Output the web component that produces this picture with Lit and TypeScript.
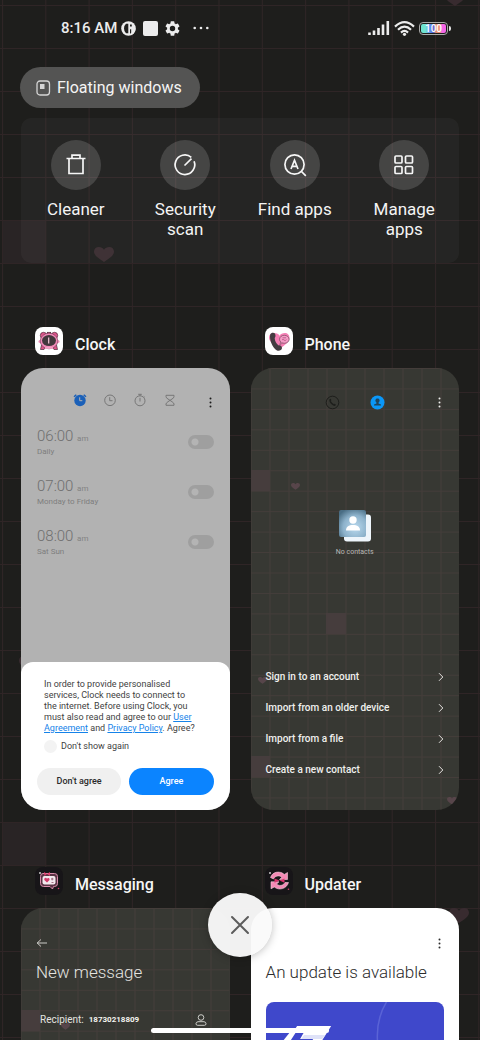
import { LitElement, html, svg, css } from "lit";
import { customElement, property } from "lit/decorators.js";

const heart = (x: number, y: number, w: number) => svg`
  <path transform="translate(${x} ${y}) scale(${w / 20})"
    d="M10 15C4 11 0 8.500 0 4.600C0 1.800 2 0 4.800 0C7 0 9 1 10 2.800C11 1 13 0 15.200 0C18 0 20 1.800 20 4.600C20 8.500 16 11 10 15Z"></path>`;

const moreIcon = html`<svg class="more" viewBox="0 0 5 11" width="5" height="11" aria-hidden="true">
  <g fill="currentColor"><circle cx="2.500" cy="1.500" r="1"></circle><circle cx="2.500" cy="5.500" r="1"></circle><circle cx="2.500" cy="9.500" r="1"></circle></g>
</svg>`;

const chevron = html`<svg viewBox="0 0 6 10" width="6" height="10" aria-hidden="true">
  <path d="M1 1.200L4.800 5L1 8.800" fill="none" stroke="#e4e4e0" stroke-width="1"></path>
</svg>`;

const trashIcon = svg`<path d="M2.500 5.500H21.500M8 5.300V2.200H16V5.300M5 5.500V20.500H19V5.500"></path>`;
const scanIcon = svg`<path d="M18.300 4.300A9.800 9.800 0 1 0 21.100 8.300"></path><path d="M11.500 12.500L18.500 5.700"></path>`;
const findIcon = svg`<circle cx="11.500" cy="11.500" r="9.600"></circle><path d="M18.500 18.500L22.800 22.800M8 16L11.500 7.300L15 16M9.200 13.300H13.800"></path>`;
const manageIcon = svg`<rect x="3" y="3" width="7" height="7" rx="1"></rect><rect x="13.500" y="3" width="7" height="7" rx="1"></rect><rect x="3" y="13.500" width="7" height="7" rx="1"></rect><rect x="13.500" y="13.500" width="7" height="7" rx="1"></rect>`;

const tools = [
  { label: "Cleaner", icon: trashIcon },
  { label: "Security scan", icon: scanIcon },
  { label: "Find apps", icon: findIcon },
  { label: "Manage apps", icon: manageIcon },
];

const alarms = [
  { time: "06:00", repeat: "Daily" },
  { time: "07:00", repeat: "Monday to Friday" },
  { time: "08:00", repeat: "Sat Sun" },
];

const contactActions = ["Sign in to an account", "Import from an older device", "Import from a file", "Create a new contact"];

const clockApp = html`<svg viewBox="0 0 28 28" width="28" height="28" aria-hidden="true">
  <rect width="28" height="28" rx="8" fill="#fff"></rect>
  <g fill="#e0558a" stroke="#4a2a3a" stroke-width=".7">
    <path d="M6.500 18L5.500 22.500H9L11 20ZM21.500 18L22.500 22.500H19L17 20Z"></path>
    <circle cx="8.500" cy="8.500" r="3.200"></circle><circle cx="19.500" cy="8.500" r="3.200"></circle>
    <rect x="12.300" y="5.300" width="3.400" height="2.400"></rect>
  </g>
  <circle cx="5" cy="14.500" r="1.600" fill="#f59ac0"></circle><circle cx="23" cy="14.500" r="1.600" fill="#f59ac0"></circle>
  <ellipse cx="14" cy="14" rx="8.800" ry="7.800" fill="#f28ab8" stroke="#6b3650" stroke-width=".6"></ellipse>
  <ellipse cx="14" cy="13.600" rx="7" ry="5.500" fill="#43383d"></ellipse>
  <path d="M13.700 10.500V16.500" stroke="#f8c6da" stroke-width="1.200"></path>
  <path d="M10 21H18" stroke="#f7a9cb" stroke-width="1.600"></path>
</svg>`;

const phoneApp = html`<svg viewBox="0 0 28 28" width="28" height="28" aria-hidden="true">
  <rect width="28" height="28" rx="8" fill="#fff"></rect>
  <path d="M14.500 22C8 17 4 14.500 4 10.500C4 7.500 6 6 9 6C12 6 13.500 7 14.500 8.800C15.500 7 17.500 6 19.800 6C22.500 6 24.500 8 24.500 11C24.500 14.500 20.500 17.800 14.500 22Z" fill="#f57fb5"></path>
  <ellipse cx="19.300" cy="12.300" rx="4.800" ry="4" fill="#f59cc6" stroke="#74485d" stroke-width=".7"></ellipse>
  <path d="M15.800 15L14.800 17.600L17.500 16.200" fill="#f59cc6" stroke="#74485d" stroke-width=".6"></path>
  <path d="M17 13Q18 11.500 19 13T21.500 12.600M17.500 10.800H21" fill="none" stroke="#a84c79" stroke-width=".7"></path>
  <path d="M5.200 7.500C6 5.600 8.800 5.100 9.900 6.600C10.800 8.100 10.700 10 9.700 11C9.800 14 11.300 16.600 13.700 18.400C15.300 18 17 19.300 17 21C16.900 23.200 14 24.400 12 23.500C7.200 20.700 4.200 12.500 5.200 7.500Z" fill="#443c41"></path>
</svg>`;

const messagingApp = html`<svg viewBox="0 0 28 28" width="28" height="28" aria-hidden="true">
  <rect width="28" height="28" rx="8" fill="#171518"></rect>
  <path d="M8 6.500H19.500Q22.500 6.500 22.500 9.500V16.500Q22.500 19.500 19.500 19.500H18.500L17.500 22L15 19.500H8.500Q5.500 19.500 5.500 16.500V9.500Q5.500 6.500 8 6.500Z" fill="#5b3344" stroke="#d98cab" stroke-width="1"></path>
  <rect x="7.500" y="9" width="13" height="8.500" rx="2" fill="#f3e9ee"></rect>
  <path d="M12 15.500L9.300 13Q8.800 11 10.500 10.800Q11.500 10.800 12 11.800Q12.500 10.800 13.600 11Q15 11.500 14.500 13Z" fill="#d23a69"></path>
  <path d="M16 12H18.500M17.200 10.800V13.400M16.500 15.500H18.500" stroke="#8b4f68" stroke-width=".8"></path>
  <path d="M9 5L12 7L9.500 9ZM15 5L12 7L15 9Z" fill="#e0416f"></path>
  <path d="M5 5V7M4 6H6" stroke="#fff" stroke-width=".7"></path><circle cx="23.500" cy="21.500" r=".8" fill="#d23a69"></circle>
</svg>`;

const updaterApp = html`<svg viewBox="0 0 28 28" width="28" height="28" aria-hidden="true">
  <rect width="28" height="28" rx="8" fill="#171518"></rect>
  <g fill="#f48ab5" stroke="#f0cfdc" stroke-width=".6">
    <path d="M5.500 10.500C7.500 4.500 15 3.500 19.300 7.500L22.500 5.500V12.500H14.500L16.800 10.300C14.500 8 10 8.500 8.500 12Z"></path>
    <path d="M23.500 15.500C21.500 22 14 23.800 9.300 20L6 21.800V14.800H14L11.700 17C14 19.300 18 19 20 15.500Z"></path>
  </g>
  <path d="M9.500 11.500L14.500 13.400L9.500 15.800ZM19.500 11.500L14.500 13.400L19.500 15.800Z" fill="#d9326c"></path>
  <path d="M5 5V7M4 6H6" stroke="#fff" stroke-width=".7"></path><circle cx="23.500" cy="22.300" r=".8" fill="#d23a69"></circle>
</svg>`;

const shared = css`
  * { box-sizing: border-box; }
  svg { display: block; flex: none; }
  button, input { font: inherit; color: inherit; margin: 0; padding: 0; border: 0; background: none; }
  h1, h2, h3, p, ul { margin: 0; padding: 0; font-weight: 400; list-style: none; }
`;

@customElement("grid-wallpaper")
class GridWallpaper extends LitElement {
  @property({ type: Boolean }) small = false;

  static styles = css`
    :host { position: absolute; inset: 0; overflow: hidden; pointer-events: none; }
    svg { display: block; width: 100%; height: 100%; }
  `;

  render() {
    if (this.small) {
      return html`<svg aria-hidden="true">
        <defs><pattern id="g" x="18.500" y="0" width="19" height="20.450" patternUnits="userSpaceOnUse">
          <path d="M.5 0V21M0 .5H19" stroke="#443d3a" stroke-width="1"></path>
        </pattern></defs>
        <rect width="100%" height="100%" fill="url(#g)"></rect>
        <g fill="#463d3d">
          <rect x="0" y="102" width="19" height="21"></rect>
          <rect x="75" y="245" width="20" height="21"></rect>
          <rect x="0" y="388" width="19" height="21"></rect>
        </g>
        <g fill="#57454a">${heart(40, 115, 9)}${heart(7, 309, 9)}${heart(196, 429, 10)}</g>
      </svg>`;
    }
    return html`<svg aria-hidden="true">
      <defs><pattern id="g" x="2" y="5" width="43.300" height="43" patternUnits="userSpaceOnUse">
        <path d="M.5 0V43M0 .5H44" stroke="#2f2526" stroke-width="1"></path>
      </pattern></defs>
      <g fill="#292425">
        <rect x="2" y="220" width="44" height="43"></rect>
        <rect x="2" y="822" width="44" height="43"></rect>
      </g>
      <rect width="100%" height="100%" fill="url(#g)"></rect>
      <g fill="#382b2f">${heart(94, 247, 20)}${heart(445, -9, 20)}${heart(449, 908, 20)}${heart(19, 656, 20)}</g>
    </svg>`;
  }
}

@customElement("status-bar")
class StatusBar extends LitElement {
  static styles = [shared, css`
    :host { display: flex; align-items: center; justify-content: space-between; height: 56px; padding: 0 29px 0 61px; color: #ececec; }
    .side { display: flex; align-items: center; }
    .time { font-size: 15px; line-height: 20px; font-weight: 500; margin-right: 4px; }
    .notes { gap: 7px; }
    .system { gap: 4px; }
    .dots { margin-left: 6px; }
    .battery { display: flex; align-items: center; }
    .level { width: 29px; height: 13px; border: 1px solid #a9a9a9; border-radius: 4px; padding: 1px; }
    .charge {
      display: block; height: 9px; border-radius: 2px; text-align: center; font-size: 10px; line-height: 9px; font-weight: 500; color: #fff;
      background: linear-gradient(90deg, #6fe3d0 0 18%, #6aa5ee 30%, #4d63dc 48%, #e8926c 62%, #ee8f78 74%, #f566e8 84%);
    }
    .cap { width: 2px; height: 5px; margin-left: 1px; border-radius: 0 2px 2px 0; background: #e4e4e4; }
  `];

  render() {
    return html`
      <div class="side">
        <span class="time">8:16 AM</span>
        <div class="side notes">
          <svg viewBox="0 0 15 15" width="15" height="15" aria-hidden="true">
            <circle cx="7.500" cy="7.500" r="7.300" fill="#ececec"></circle>
            <path d="M5 2.800H7.300V12.300H5Q3 10.500 3 7.500T5 2.800ZM9 3.500H10.800V5.500H9ZM9 8.300H13Q12.500 11 9 12.800Z" fill="#20201e"></path>
            <path d="M10.200 8H14.500Q14 12 10.200 14Z" fill="#ececec"></path>
          </svg>
          <svg viewBox="0 0 15 15" width="15" height="15" aria-hidden="true"><rect width="15" height="15" rx="2" fill="#ececec"></rect></svg>
          <svg viewBox="2 2 20 20" width="15" height="15" aria-hidden="true">
            <path fill="#ececec" d="M19.140 12.940c.04-.3.06-.61.06-.94 0-.32-.02-.64-.07-.94l2.030-1.580a.49.490 0 0 0 .12-.61l-1.920-3.320a.49.490 0 0 0-.59-.22l-2.390.96a7 7 0 0 0-1.620-.94l-.36-2.540a.48.480 0 0 0-.48-.41h-3.840a.47.470 0 0 0-.47.410l-.36 2.540c-.59.240-1.130.570-1.620.940l-2.390-.96a.48.480 0 0 0-.59.220L2.740 8.870a.47.470 0 0 0 .12.610l2.030 1.580c-.05.300-.09.630-.09.940s.02.640.070.940l-2.030 1.580a.49.490 0 0 0-.12.610l1.920 3.320c.12.220.370.290.590.220l2.390-.96c.500.380 1.030.700 1.620.940l.36 2.540c.05.240.240.410.480.410h3.840c.24 0 .44-.17.470-.41l.36-2.540a7 7 0 0 0 1.620-.94l2.390.96c.22.080.470 0 .59-.22l1.920-3.320a.47.470 0 0 0-.12-.61zM12 15.600a3.600 3.600 0 1 1 0-7.200 3.600 3.600 0 0 1 0 7.200z"></path>
          </svg>
          <svg class="dots" viewBox="0 0 16 4" width="16" height="4" aria-hidden="true"><g fill="#ececec"><circle cx="1.700" cy="2" r="1.300"></circle><circle cx="8" cy="2" r="1.300"></circle><circle cx="14.300" cy="2" r="1.300"></circle></g></svg>
        </div>
      </div>
      <div class="side system">
        <svg viewBox="0 0 22 14" width="22" height="14" aria-hidden="true"><path d="M1.500 14V11.500M6 14V9.500M10.500 14V7M15 14V3.500M19.800 14V0" stroke="#ececec" stroke-width="2.600" fill="none"></path></svg>
        <svg viewBox="0 0 21 15" width="21" height="15" aria-hidden="true">
          <g fill="none" stroke="#ececec" stroke-width="2.200"><path d="M1 5.600Q10.500 -3.200 20 5.600"></path><path d="M4 8.800Q10.500 2.600 17 8.800"></path><path d="M7 11.600Q10.500 8.200 14 11.600"></path></g>
          <circle cx="10.500" cy="13.300" r="1.600" fill="#ececec"></circle>
        </svg>
        <div class="battery"><div class="level"><span class="charge">100</span></div><div class="cap"></div></div>
      </div>`;
  }
}

@customElement("quick-tools")
class QuickTools extends LitElement {
  static styles = [shared, css`
    :host { display: block; padding: 11px 21px 0; color: #f4f4f4; }
    .floating {
      display: inline-flex; align-items: center; gap: 6px; height: 41px; padding: 1px 18px 0 16px; border-radius: 21px;
      margin: 0 0 10px -1px; background: #545453; font-size: 16px; line-height: 20px; vertical-align: top;
    }
    .panel { display: grid; grid-template-columns: repeat(4, 1fr); padding: 22px 0 24px; border-radius: 10px; background: rgba(255, 255, 255, .035); }
    .tool { display: flex; flex-direction: column; align-items: center; gap: 9px; font-size: 17px; line-height: 20px; padding: 0 16px; text-align: center; }
    .disc { display: grid; place-items: center; width: 50px; height: 50px; border-radius: 50%; background: rgba(255, 255, 255, .15); }
  `];

  render() {
    return html`
      <button class="floating">
        <svg viewBox="0 0 15 16" width="15" height="16" aria-hidden="true"><rect x="1" y="1" width="12.500" height="14" rx="3" fill="none" stroke="#d5d5d5" stroke-width="1.300"></rect><rect x="4" y="4" width="4.500" height="5" fill="#d5d5d5"></rect></svg>
        Floating windows
      </button>
      <div class="panel">
        ${tools.map((t) => html`<button class="tool">
          <span class="disc"><svg viewBox="0 0 24 24" width="24" height="24" fill="none" stroke="#f6f6f6" stroke-width="1.700" aria-hidden="true">${t.icon}</svg></span>
          <span>${t.label}</span>
        </button>`)}
      </div>`;
  }
}

@customElement("clock-preview")
class ClockPreview extends LitElement {
  static styles = [shared, css`
    :host { display: flex; flex-direction: column; flex: 1; min-width: 0; background: #b2b2b2; color: #6f6f6f; }
    .bar { display: grid; grid-template-columns: 1fr auto 1fr; padding: 24px 16px 0; height: 49px; align-items: start; }
    .tabs { grid-column: 2; display: flex; gap: 14px; }
    .menu { justify-self: end; color: #1b1b1b; padding: 5px 1px 0 0; }
    .alarm { display: flex; align-items: center; justify-content: space-between; height: 50px; padding: 0 16px; }
    .time { font-size: 15px; line-height: 16px; font-weight: 300; }
    .time small { font-size: 8px; font-weight: 400; color: #828282; }
    .repeat { font-size: 8px; line-height: 10px; color: #7e7e7e; }
    .switch { appearance: none; width: 26px; height: 14px; border-radius: 7px; background: radial-gradient(circle at 7px 7px, #b4b4b4 3px, #9f9f9f 4px); }
    .dialog { margin-top: auto; padding: 17px 16px 15px; border-radius: 12px 12px 0 0; background: #fff; color: #3f3f3f; font-size: 9px; line-height: 11px; }
    .dialog p { padding: 0 15px 0 7px; }
    a { color: #1583e9; }
    .again { display: flex; align-items: center; gap: 4px; padding: 6px 7px 15px; }
    .again input { appearance: none; width: 13px; height: 13px; border-radius: 50%; background: #f3f3f3; }
    .actions { display: grid; grid-template-columns: 1fr 1fr; gap: 8px; }
    .actions button { height: 27px; border-radius: 14px; font-weight: 500; background: #f0f0f0; color: #2b2b2b; }
    .actions .primary { background: #0b84ff; color: #fff; }
  `];

  render() {
    return html`
      <div class="bar">
        <div class="tabs">
          <button aria-label="Alarm"><svg viewBox="0 0 16 16" width="16" height="16"><circle cx="8" cy="8.500" r="5.700" fill="#1b60b8"></circle><path d="M2 4.700L4.300 2.700M14 4.700L11.700 2.700" stroke="#1b60b8" stroke-width="1.500"></path><path d="M7.700 5.300V8.700H10.300" fill="none" stroke="#b2b2b2"></path></svg></button>
          <button aria-label="World clock"><svg viewBox="0 0 16 16" width="16" height="16" fill="none" stroke="#777"><circle cx="8" cy="8.300" r="5.300"></circle><path d="M7.700 5.200V8.700H10.500"></path></svg></button>
          <button aria-label="Stopwatch"><svg viewBox="0 0 16 16" width="16" height="16" fill="none" stroke="#777"><circle cx="8" cy="8.800" r="5"></circle><path d="M8 5.800V9.500M6.200 2.300H9.800M8 2.300V4M11.800 4.300L12.600 5"></path></svg></button>
          <button aria-label="Timer"><svg viewBox="0 0 16 16" width="16" height="16" fill="none" stroke="#777"><path d="M4 3.300H12V4.500Q12 6 10 7L6 9.700Q4 11 4 12V13.300H12V12Q12 11 10 9.700L6 7Q4 6 4 4.500Z"></path></svg></button>
        </div>
        <button class="menu" aria-label="More options">${moreIcon}</button>
      </div>
      ${alarms.map((a) => html`<div class="alarm">
        <div><div class="time">${a.time} <small>am</small></div><div class="repeat">${a.repeat}</div></div>
        <input class="switch" type="checkbox" role="switch" aria-label="${a.time} ${a.repeat}">
      </div>`)}
      <div class="dialog">
        <p>In order to provide personalised services, Clock needs to connect to the internet. Before using Clock, you must also read and agree to our <a href="#agreement">User Agreement</a> and <a href="#privacy">Privacy Policy</a>. Agree?</p>
        <label class="again"><input type="checkbox">Don't show again</label>
        <div class="actions"><button>Don't agree</button><button class="primary">Agree</button></div>
      </div>`;
  }
}

@customElement("phone-preview")
class PhonePreview extends LitElement {
  static styles = [shared, css`
    :host { position: relative; display: flex; flex-direction: column; flex: 1; min-width: 0; background: #373833; color: #f0f0ee; }
    .bar, .empty, .actions { position: relative; }
    .bar { display: grid; grid-template-columns: 1fr auto 1fr; align-items: center; padding: 27px 17px 0; }
    .tabs { grid-column: 2; display: flex; gap: 30px; }
    .menu { justify-self: end; }
    .empty { display: flex; flex-direction: column; align-items: center; gap: 5px; margin-top: 100px; font-size: 7px; line-height: 10px; color: #b9b9b5; }
    .actions { margin-top: auto; padding: 0 15px 25px; }
    .actions button { display: flex; align-items: center; justify-content: space-between; width: 100%; height: 31px; font-size: 10px; font-weight: 500; }
  `];

  render() {
    return html`
      <grid-wallpaper small></grid-wallpaper>
      <div class="bar">
        <div class="tabs">
          <button aria-label="Calls"><svg viewBox="0 0 15 15" width="15" height="15"><circle cx="7.500" cy="7.500" r="6.300" fill="none" stroke="#1e1f1c"></circle><path d="M4.500 4.200Q5.700 3.200 6.300 5L6 6.200Q6.800 8 8.600 9L9.900 8.700Q11.600 9.500 10.600 10.600Q9 11.600 6.500 9.300Q3.700 6.600 4.500 4.200Z" fill="#1e1f1c"></path></svg></button>
          <button aria-label="Contacts"><svg viewBox="0 0 15 15" width="15" height="15"><circle cx="7.500" cy="7.500" r="7" fill="#0a97f8"></circle><path d="M7.500 3.500A2 2 0 0 1 8.700 7.200L8.500 8.500L11 9.500V10.600H4V9.500L6.500 8.500L6.300 7.200A2 2 0 0 1 7.500 3.500Z" fill="#20445c"></path></svg></button>
        </div>
        <button class="menu" aria-label="More options">${moreIcon}</button>
      </div>
      <div class="empty">
        <svg viewBox="0 0 32 32" width="32" height="32" aria-hidden="true">
          <defs><radialGradient id="b" cx=".6" cy=".65" r=".75"><stop offset="0" stop-color="#b9d9ee"></stop><stop offset=".6" stop-color="#8db2cb"></stop><stop offset="1" stop-color="#4a6e85"></stop></radialGradient></defs>
          <rect x="5" y="4.500" width="27" height="27" rx="3" fill="#eef5fb"></rect><rect width="27" height="27" rx="2" fill="url(#b)"></rect>
          <g fill="#fff"><circle cx="14" cy="10" r="3.700"></circle><path d="M7 20.500C7 16.500 10 15 14 15S21 16.500 21 20.500Z"></path></g>
        </svg>
        No contacts
      </div>
      <div class="actions">${contactActions.map((c) => html`<button>${c}${chevron}</button>`)}</div>`;
  }
}

@customElement("messaging-preview")
class MessagingPreview extends LitElement {
  static styles = [shared, css`
    :host { position: relative; display: block; flex: 1; min-width: 0; padding: 29px 15px 0; background: #373833; color: #e4e4e0; }
    .back, .title, .to { position: relative; }
    .back { display: block; }
    .title { margin-top: 11px; font-size: 17px; line-height: 24px; font-weight: 300; }
    .to { display: flex; align-items: center; gap: 5px; margin-top: 29px; padding: 0 8px 0 4px; font-size: 10px; line-height: 14px; }
    input { flex: 1; min-width: 0; font-size: 8px; font-weight: 700; color: #f4f4f0; }
  `];

  render() {
    return html`
      <grid-wallpaper small></grid-wallpaper>
      <button class="back" aria-label="Back"><svg viewBox="0 0 12 12" width="12" height="12"><path d="M11 6H1.200M5 2.500L1.200 6L5 9.500" fill="none" stroke="#dcdcd8" stroke-width=".9"></path></svg></button>
      <h3 class="title">New message</h3>
      <div class="to">
        <label for="to">Recipient:</label><input id="to" type="tel" value="18730218809">
        <button aria-label="Choose contact"><svg viewBox="0 0 12 14" width="12" height="14"><g fill="none" stroke="#dcdcd8" stroke-width=".9"><circle cx="6" cy="4.500" r="2.800"></circle><path d="M3 8.700H9Q11 9 11 10.700Q11 12.300 9.500 12.300H2.500Q1 12.300 1 10.700Q1 9 3 8.700Z"></path></g></svg></button>
      </div>`;
  }
}

@customElement("updater-preview")
class UpdaterPreview extends LitElement {
  static styles = [shared, css`
    :host { display: block; flex: 1; min-width: 0; padding: 29px 15px 0; background: #fff; color: #2c2c2c; }
    .menu { display: block; margin-left: auto; padding-right: 2px; height: 12px; }
    .title { margin-top: 11px; font-size: 17px; line-height: 24px; font-weight: 300; white-space: nowrap; }
    .hero { margin-top: 18px; border-radius: 8px; overflow: hidden; background: #3f48cb; }
    .hero svg { width: 100%; height: auto; }
  `];

  render() {
    return html`
      <button class="menu" aria-label="More options">${moreIcon}</button>
      <h3 class="title">An update is available</h3>
      <div class="hero"><svg viewBox="0 0 178 178" aria-hidden="true">
        <circle cx="178" cy="34" r="67" fill="none" stroke="#5a63d6" stroke-width="1.500"></circle>
        <path d="M24 30H30L17 50H8Z" fill="#fff"></path>
        <path d="M41 24H65L46 54H36L47 37H34L38 30H27L31 24Z" fill="#fff"></path>
        <path d="M38 33H59L56 37H35Z" fill="#dfe2f8"></path>
      </svg></div>`;
  }
}

@customElement("app-root")
class AppRoot extends LitElement {
  static styles = [shared, css`
    :host {
      position: relative; display: block; height: 100vh; overflow: hidden; background: #1e1e1c;
      font-family: Roboto, "Liberation Sans", sans-serif; color: #f6f6f6;
    }
    .content { position: relative; }
    .tasks { display: grid; grid-template-columns: repeat(2, minmax(0, 1fr)); gap: 57px 21px; padding: 64px 21px 0; }
    .task { display: flex; flex-direction: column; gap: 12px; }
    .head { display: flex; align-items: flex-end; gap: 12px; padding-left: 14px; }
    .head svg { margin-bottom: 1px; }
    .name { font-size: 16px; line-height: 22px; font-weight: 500; }
    .card { display: flex; min-height: 442px; border-radius: 22px; overflow: hidden; }
    .close {
      position: absolute; left: 50%; bottom: 83px; margin-left: -32px; display: grid; place-items: center; width: 64px; height: 64px;
      border-radius: 50%; background: rgba(250, 250, 250, .96); box-shadow: 0 1px 8px rgba(0, 0, 0, .25);
    }
    .home { position: absolute; left: 50%; bottom: 7px; width: 178px; height: 5px; margin-left: -89px; border-radius: 3px; background: #fff; }
  `];

  render() {
    const task = (name: string, icon: unknown, preview: unknown) => html`<article class="task">
      <div class="head">${icon}<h2 class="name">${name}</h2></div>
      <div class="card">${preview}</div>
    </article>`;
    return html`
      <grid-wallpaper></grid-wallpaper>
      <div class="content">
        <status-bar></status-bar>
        <quick-tools></quick-tools>
        <main class="tasks">
          ${task("Clock", clockApp, html`<clock-preview></clock-preview>`)}
          ${task("Phone", phoneApp, html`<phone-preview></phone-preview>`)}
          ${task("Messaging", messagingApp, html`<messaging-preview></messaging-preview>`)}
          ${task("Updater", updaterApp, html`<updater-preview></updater-preview>`)}
        </main>
      </div>
      <button class="close" aria-label="Close all"><svg viewBox="0 0 20 20" width="20" height="20"><path d="M2 2L18 18M18 2L2 18" stroke="#5c5c5c" stroke-width="2" stroke-linecap="round"></path></svg></button>
      <div class="home"></div>`;
  }
}
